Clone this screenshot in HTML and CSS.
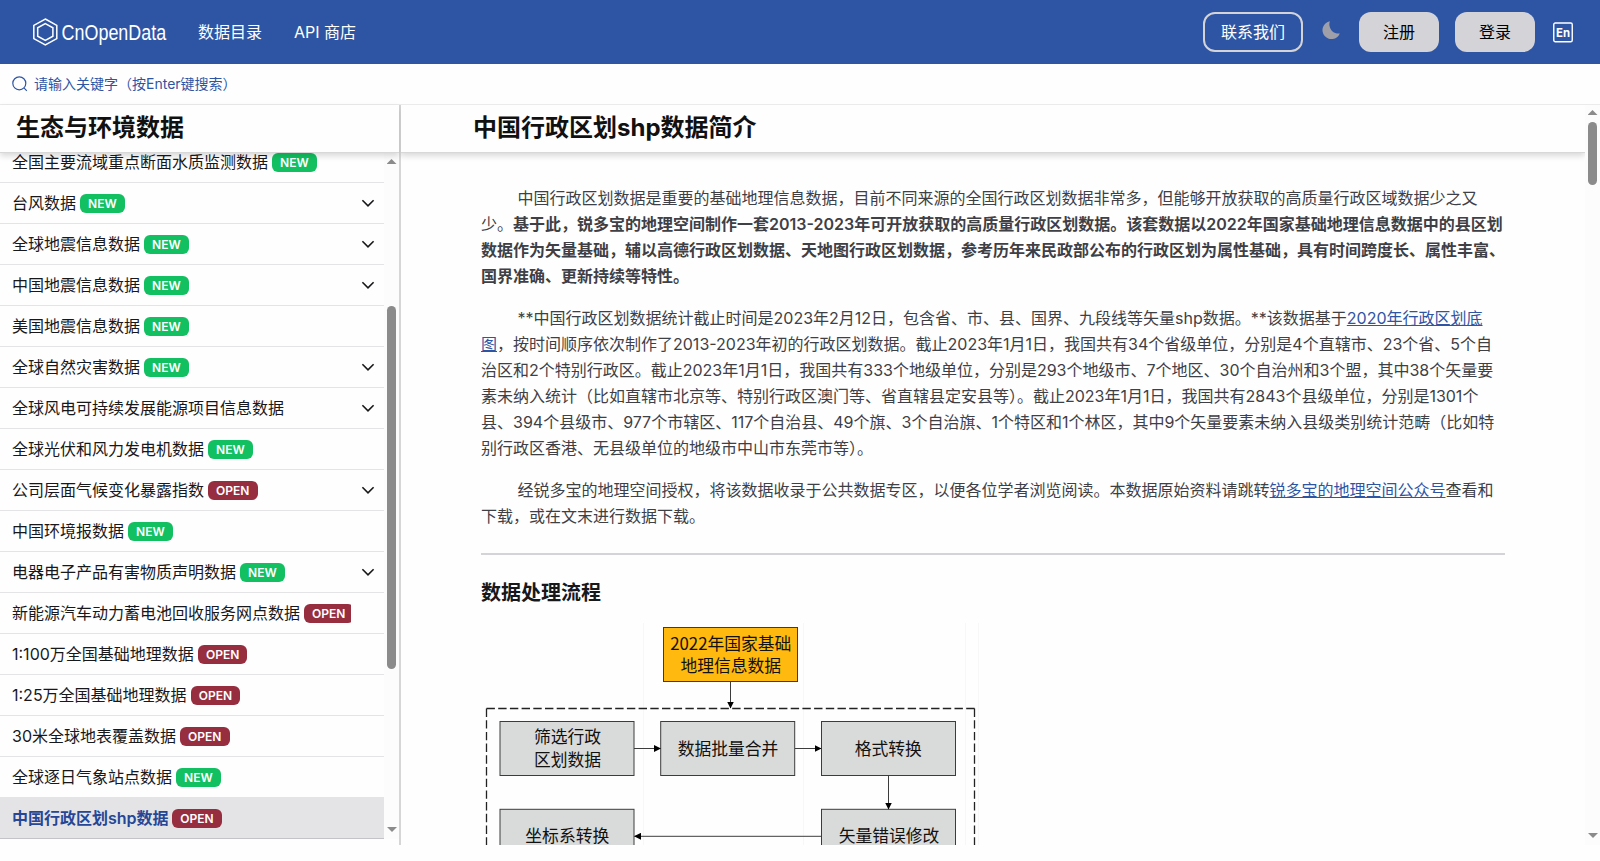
FILE: index.html
```
<!DOCTYPE html>
<html lang="zh-CN">
<head>
    <meta charset="UTF-8">
    <meta name="viewport" content="width=device-width, initial-scale=1.0">
    <title>中国行政区划shp数据 - CnOpenData</title>
    <link rel="stylesheet" href="styles.css">
</head>
<body>
    <svg width="0" height="0" class="sprite">
        <symbol id="chevron" viewBox="0 0 16 16"><path d="M2.4 5.2 8 10.8l5.6-5.6" fill="none" stroke="#18181b" stroke-width="1.6"/></symbol>
    </svg>
    <header class="navbar">
        <a class="logo" href="#">
            <svg width="136" height="30" viewBox="0 0 136 30" fill="none" stroke="#fff">
                <path d="M13.3 2 24.8 8.4V21.6L13.3 28 1.8 21.6V8.4Z" stroke-width="1.5"/>
                <path d="M13.3 6.6 20.9 10.8V19.2L13.3 23.4 5.7 19.2V10.8Z" stroke-width="1.5"/>
                <text x="29.6" y="23" class="logo-text" textLength="104.6" lengthAdjust="spacingAndGlyphs">CnOpenData</text>
            </svg>
        </a>
        <nav class="nav-links">
            <a href="#">数据目录</a>
            <a href="#">API 商店</a>
        </nav>
        <div class="nav-right">
            <button class="btn btn-contact">联系我们</button>
            <svg class="moon" width="20" height="20" viewBox="0 0 20 20"><path fill="#9f9fa9" d="M8.9 1.2a9 9 0 1 0 9.9 12.3A9.2 9.2 0 0 1 8.9 1.2Z"/></svg>
            <button class="btn">注册</button>
            <button class="btn">登录</button>
            <svg class="lang" width="20" height="21" viewBox="0 0 20 21">
                <rect x=".75" y="1" width="18.5" height="18.8" rx="1.5" fill="none" stroke="#fff" stroke-width="1.4"/>
                <text x="10" y="14.6" class="lang-text" textLength="14" lengthAdjust="spacingAndGlyphs">En</text>
            </svg>
        </div>
    </header>

    <div class="search">
        <svg width="16" height="16" viewBox="0 0 16 16" fill="none" stroke="#2e55a4" stroke-width="1.2"><circle cx="7.3" cy="7.3" r="6.5"/><path d="m12.2 12.2 2.6 2.6"/></svg>
        <span>请输入关键字（按Enter键搜索）</span>
    </div>

    <div class="layout">
        <aside class="sidebar">
            <h2 class="bar-title">生态与环境数据</h2>
            <div class="scroll-area">
                <ul class="menu">
                    <li><span>全国主要流域重点断面水质监测数据 <b class="new">NEW</b></span></li>
                    <li><span>台风数据 <b class="new">NEW</b></span><svg><use href="#chevron"/></svg></li>
                    <li><span>全球地震信息数据 <b class="new">NEW</b></span><svg><use href="#chevron"/></svg></li>
                    <li><span>中国地震信息数据 <b class="new">NEW</b></span><svg><use href="#chevron"/></svg></li>
                    <li><span>美国地震信息数据 <b class="new">NEW</b></span></li>
                    <li><span>全球自然灾害数据 <b class="new">NEW</b></span><svg><use href="#chevron"/></svg></li>
                    <li><span>全球风电可持续发展能源项目信息数据</span><svg><use href="#chevron"/></svg></li>
                    <li><span>全球光伏和风力发电机数据 <b class="new">NEW</b></span></li>
                    <li><span>公司层面气候变化暴露指数 <b class="open">OPEN</b></span><svg><use href="#chevron"/></svg></li>
                    <li><span>中国环境报数据 <b class="new">NEW</b></span></li>
                    <li><span>电器电子产品有害物质声明数据 <b class="new">NEW</b></span><svg><use href="#chevron"/></svg></li>
                    <li><span>新能源汽车动力蓄电池回收服务网点数据 <b class="open">OPEN</b></span></li>
                    <li><span>1:100万全国基础地理数据 <b class="open">OPEN</b></span></li>
                    <li><span>1:25万全国基础地理数据 <b class="open">OPEN</b></span></li>
                    <li><span>30米全球地表覆盖数据 <b class="open">OPEN</b></span></li>
                    <li><span>全球逐日气象站点数据 <b class="new">NEW</b></span></li>
                    <li class="active"><span>中国行政区划shp数据 <b class="open">OPEN</b></span></li>
                </ul>
                <div class="scrollbar side-bar"><i class="up"></i><i class="thumb"></i><i class="down"></i></div>
            </div>
        </aside>

        <main class="content">
            <div class="page">
                <h1 class="bar-title main-title">中国行政区划shp数据简介</h1>
                <article>
                    <p>中国行政区划数据是重要的基础地理信息数据，目前不同来源的全国行政区划数据非常多，但能够开放获取的高质量行政区域数据少之又少。<strong>基于此，锐多宝的地理空间制作一套2013-2023年可开放获取的高质量行政区划数据。该套数据以2022年国家基础地理信息数据中的县区划数据作为矢量基础，辅以高德行政区划数据、天地图行政区划数据，参考历年来民政部公布的行政区划为属性基础，具有时间跨度长、属性丰富、国界准确、更新持续等特性。</strong></p>
                    <p>**中国行政区划数据统计截止时间是2023年2月12日，包含省、市、县、国界、九段线等矢量shp数据。**该数据基于<a href="#">2020年行政区划底图</a>，按时间顺序依次制作了2013-2023年初的行政区划数据。截止2023年1月1日，我国共有34个省级单位，分别是4个直辖市、23个省、5个自治区和2个特别行政区。截止2023年1月1日，我国共有333个地级单位，分别是293个地级市、7个地区、30个自治州和3个盟，其中38个矢量要素未纳入统计（比如直辖市北京等、特别行政区澳门等、省直辖县定安县等）。截止2023年1月1日，我国共有2843个县级单位，分别是1301个县、394个县级市、977个市辖区、117个自治县、49个旗、3个自治旗、1个特区和1个林区，其中9个矢量要素未纳入县级类别统计范畴（比如特别行政区香港、无县级单位的地级市中山市东莞市等）。</p>
                    <p>经锐多宝的地理空间授权，将该数据收录于公共数据专区，以便各位学者浏览阅读。本数据原始资料请跳转<a href="#">锐多宝的地理空间公众号</a>查看和下载，或在文末进行数据下载。</p>
                    <hr>
                    <h3>数据处理流程</h3>
                    <!-- 流程图 -->
                    <svg class="flow" width="498" height="400" viewBox="481 623 498 400">
                        <defs>
                            <marker id="arrow" markerUnits="userSpaceOnUse" markerWidth="7" markerHeight="7" refX="6.5" refY="3.5" orient="auto"><path d="M0 0 7 3.5 0 7Z"/></marker>
                        </defs>
                        <g stroke="#f7f7f7"><path d="M643.5 623V900M978.5 623V900M803.5 623V900M965.5 623V900"/></g>
                        <path class="dash" d="M486.5 708.5H975" stroke-dasharray="8.4 3.3"/>
                        <path class="dash" d="M486.5 708.5V1020M974.5 708.5V1020" stroke-dasharray="8.4 3.3"/>
                        <rect x="663.5" y="627.5" width="134" height="54" fill="#ffb90f"/>
                        <g fill="#d9dbda">
                            <rect x="500" y="721.5" width="134" height="54"/>
                            <rect x="660.7" y="721.5" width="134" height="54"/>
                            <rect x="821.5" y="721.5" width="134" height="54"/>
                            <rect x="500" y="809.3" width="134" height="54"/>
                            <rect x="821.5" y="809.3" width="134" height="54"/>
                        </g>
                        <g class="line">
                            <path d="M730.5 682V708" marker-end="url(#arrow)"/>
                            <path d="M634 748.5H660.5" marker-end="url(#arrow)"/>
                            <path d="M795 748.5H821" marker-end="url(#arrow)"/>
                            <path d="M888.5 776V809" marker-end="url(#arrow)"/>
                            <path d="M821 836.3H634.5" marker-end="url(#arrow)"/>
                        </g>
                        <g class="label">
                            <text x="730.8" y="649.5">2022年国家基础</text>
                            <text x="730.8" y="672">地理信息数据</text>
                            <text x="567.5" y="743">筛选行政</text>
                            <text x="567.5" y="766">区划数据</text>
                            <text x="728" y="754.5">数据批量合并</text>
                            <text x="888.3" y="754.5">格式转换</text>
                            <text x="567.3" y="842">坐标系转换</text>
                            <text x="889" y="842">矢量错误修改</text>
                        </g>
                    </svg>
                </article>
            </div>
            <div class="scrollbar main-bar"><i class="up"></i><i class="thumb"></i><i class="down"></i></div>
        </main>
    </div>
</body>
</html>
```

FILE: styles.css
```
* {
    box-sizing: border-box;
}
body {
    margin: 0;
    height: 861px;
    overflow: hidden;
    background: #fefefe;
    color: #18181b;
    font-family: Inter, "Noto Sans CJK SC", sans-serif;
    font-size: 16px;
}
h1, h2, h3, p, ul {
    margin: 0;
    padding: 0;
}
.sprite {
    position: absolute;
}
.navbar {
    display: flex;
    align-items: center;
    height: 64px;
    padding: 0 26px 0 32px;
    background: #2e55a4;
    color: #fff;
}
.logo {
    display: flex;
    margin-top: -1px;
}
.logo-text {
    font-family: "Liberation Sans", Arial, sans-serif;
    font-size: 22.5px;
    fill: #fff;
    stroke: none;
}
.nav-links {
    display: flex;
    gap: 32px;
    margin: -2px 0 0 30px;
}
.nav-links a {
    color: #fff;
    text-decoration: none;
}
.nav-right {
    display: flex;
    align-items: center;
    margin-left: auto;
}
.btn {
    width: 80px;
    height: 40px;
    margin-right: 16px;
    padding: 0 0 2px;
    border: 0;
    border-radius: 12px;
    background: #d4d4d8;
    color: #000;
    font: inherit;
}
.btn-contact {
    width: 100px;
    border: 2px solid #d4d4d8;
    background: none;
    color: #fff;
}
.moon {
    margin: -4px 18px 0 2px;
}
.lang {
    margin: 1px 1px 0 2px;
}
.lang-text {
    font-size: 11.5px;
    font-weight: 700;
    text-anchor: middle;
    fill: #fff;
}
.search {
    display: flex;
    align-items: center;
    gap: 6px;
    height: 41px;
    padding-left: 12px;
    border-bottom: 1px solid #ebebeb;
    color: #2e55a4;
    font-size: 14px;
}
.search span {
    margin-top: -2px;
}
.layout {
    display: flex;
    height: 740px;
}
.sidebar {
    display: flex;
    flex-direction: column;
    width: 401px;
    border-right: 2px solid #d6d6d6;
}
.bar-title {
    position: relative;
    z-index: 1;
    flex: none;
    height: 48px;
    padding-left: 16px;
    border-bottom: 1px solid #d8d8d8;
    background: #fefefe;
    box-shadow: 0 3px 6px rgba(0, 0, 0, .15);
    color: #111;
    font-size: 24px;
    font-weight: 700;
    line-height: 45px;
}
.scroll-area {
    display: flex;
    height: 686px;
    overflow: hidden;
}
.menu {
    width: 384px;
    margin-top: -11px;
    list-style: none;
}
.menu li {
    display: flex;
    align-items: center;
    justify-content: space-between;
    height: 41px;
    padding: 0 8px 0 12px;
    border-bottom: 1px solid #e4e4e7;
}
.menu span {
    max-width: 339px;
    overflow: hidden;
    line-height: 26px;
    white-space: nowrap;
}
.menu b {
    display: inline-block;
    height: 19px;
    margin-left: -.6px;
    padding: 0 8.2px;
    border-radius: 6px;
    color: #fff;
    font-size: 12px;
    font-weight: 600;
    line-height: 19px;
    vertical-align: 1px;
}
.menu .new {
    background: #12c061;
}
.menu .open {
    background: #962e40;
}
.menu svg {
    width: 16px;
    height: 16px;
}
.menu .active {
    border-bottom-color: #c4c4c8;
    background: #e4e4e7;
    color: #264796;
    font-weight: 600;
}
.scrollbar {
    display: flex;
    flex: none;
    flex-direction: column;
    align-items: center;
    width: 15px;
    background: #fcfcfc;
}
.scrollbar .up, .scrollbar .down {
    width: 10px;
    height: 5px;
    background: #8b8b8b;
    clip-path: polygon(50% 0, 100% 100%, 0 100%);
}
.scrollbar .down {
    margin-top: auto;
    transform: rotate(180deg);
}
.thumb {
    width: 9px;
    border-radius: 5px;
    background: #8b8b8b;
}
.side-bar {
    padding: 6px 0 7px;
}
.side-bar .thumb {
    height: 363px;
    margin-top: 142px;
}
.main-bar {
    padding: 5px 0 7px;
}
.main-bar .thumb {
    height: 63px;
    margin-top: 7px;
}
.content {
    display: flex;
    flex: 1;
    overflow: hidden;
}
.page {
    flex: 1;
    overflow: hidden;
}
.main-title {
    padding-left: 72px;
}
article {
    width: 1024px;
    margin: 32px 0 0 80px;
    color: #3f3f46;
    line-height: 26px;
}
article p {
    margin-bottom: 16px;
    text-indent: 36.5px;
}
article strong {
    font-weight: 600;
}
article a {
    color: #2e55a4;
}
hr {
    height: 2px;
    margin: 24px 0;
    border: 0;
    background: #d4d4d8;
}
h3 {
    margin-bottom: 16px;
    color: #18181b;
    font-size: 20px;
    font-weight: 600;
    line-height: 28px;
}
.flow {
    display: block;
}
.flow rect, .flow .line, .flow .dash {
    stroke: #3c3c3c;
}
.flow .line {
    fill: none;
}
.flow .dash {
    fill: none;
    stroke: #222;
    stroke-width: 1.3;
}
.label {
    font-family: "Noto Sans CJK SC", sans-serif;
    font-size: 16.8px;
    text-anchor: middle;
    fill: #111;
}
```
